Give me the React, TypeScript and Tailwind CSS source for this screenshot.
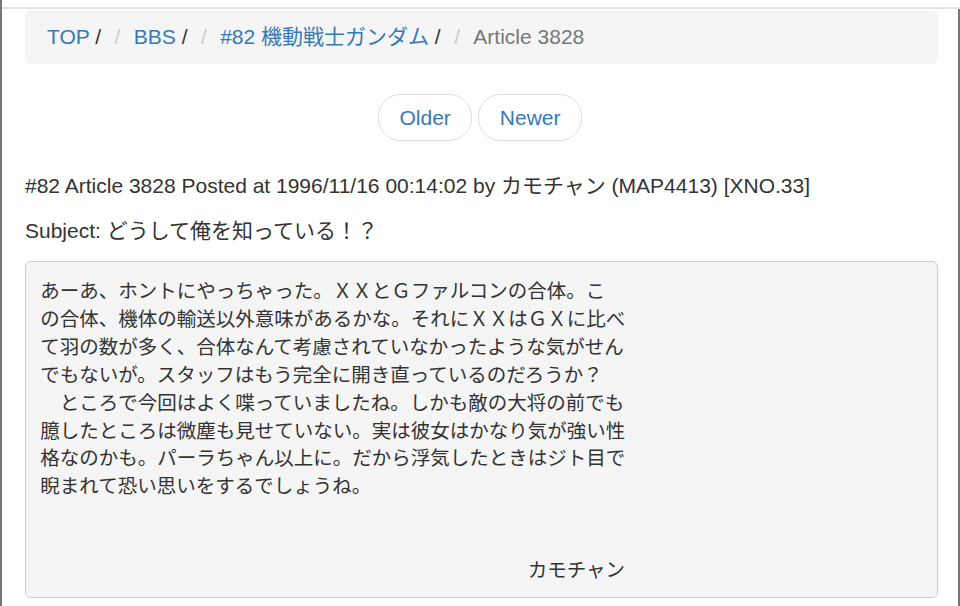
const body = [
  "あーあ、ホントにやっちゃった。ＸＸとＧファルコンの合体。こ",
  "の合体、機体の輸送以外意味があるかな。それにＸＸはＧＸに比べ",
  "て羽の数が多く、合体なんて考慮されていなかったような気がせん",
  "でもないが。スタッフはもう完全に開き直っているのだろうか？",
  "　ところで今回はよく喋っていましたね。しかも敵の大将の前でも",
  "臆したところは微塵も見せていない。実は彼女はかなり気が強い性",
  "格なのかも。パーラちゃん以上に。だから浮気したときはジト目で",
  "睨まれて恐い思いをするでしょうね。",
  "",
  "",
  "　　　　　　　　　　　　　　　　　　　　　　　　　カモチャン",
].join("\n");

const crumbs = ["TOP", "BBS", "#82 機動戦士ガンダム"];

export default function App() {
  return (
    <div className="flex h-[606px] flex-col overflow-hidden border-l-2 border-[#777] bg-white font-['Liberation_Sans','Noto_Sans_CJK_JP',sans-serif] text-[21px] leading-[30px] text-[#333]">
      <div className="h-[9px] shrink-0 border-b-2 border-[#e2e2e2]" />
      <div className="flex-1 border-r-2 border-[#777] pl-[23px] pr-[20px] pt-px">
        <ol className="mb-[30px] rounded-[6px] bg-[#f5f5f5] px-[22px] py-[12px]">
          {crumbs.map((c, i) => (
            <li key={c} className="mr-[6px] inline-block">
              {i > 0 && <span className="px-[7.5px] text-[#ccc]">/&nbsp;</span>}
              <a className="text-[#337ab7]">{c}</a> /
            </li>
          ))}
          <li className="inline-block text-[#777]">
            <span className="px-[7.5px] text-[#ccc]">/&nbsp;</span>Article 3828
          </li>
        </ol>

        <div className="mb-[30px] flex justify-center gap-[6px] pr-[3px]">
          <a className="rounded-[22.5px] border border-[#ddd] bg-white px-[20.5px] py-[7.5px] text-[#337ab7]">Older</a>
          <a className="rounded-[22.5px] border border-[#ddd] bg-white px-[20.5px] py-[7.5px] text-[#337ab7]">Newer</a>
        </div>

        <p className="mb-[15px]">#82 Article 3828 Posted at 1996/11/16 00:14:02 by カモチャン (MAP4413) [XNO.33]</p>
        <p className="mb-[15px]">Subject: どうして俺を知っている！？</p>

        <pre className="whitespace-pre-wrap rounded-[6px] border border-[#ccc] bg-[#f5f5f5] px-[14.25px] py-[14.25px] font-['Noto_Sans_CJK_JP',monospace] text-[19.5px] leading-[27.86px] text-[#333]">
          {body}
        </pre>
      </div>
    </div>
  );
}
